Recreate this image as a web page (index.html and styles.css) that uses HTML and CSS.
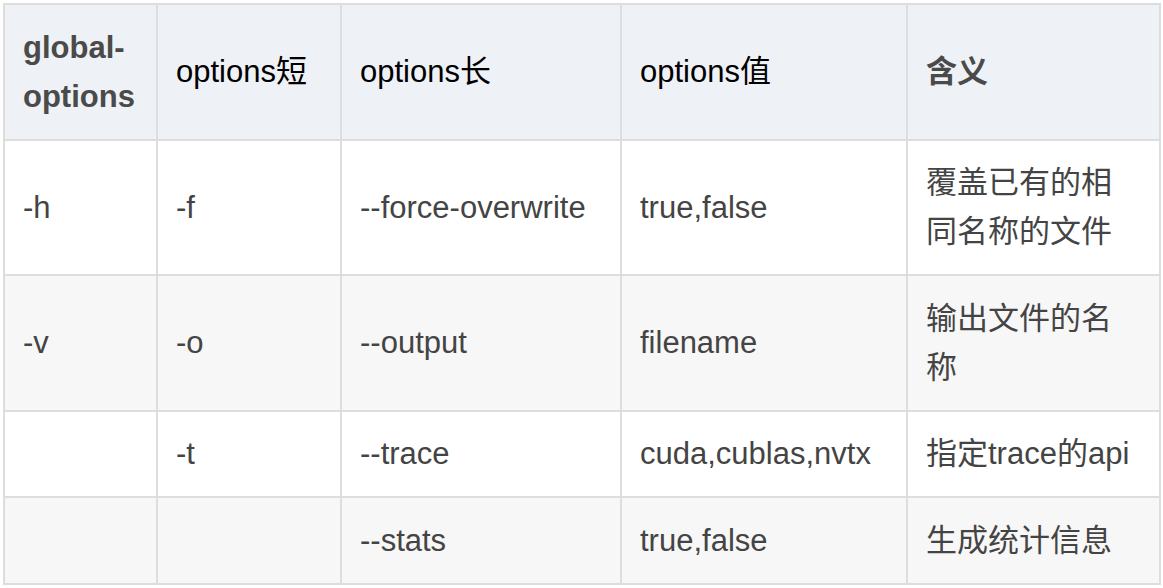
FILE: index.html
```html
<!DOCTYPE html>
<html>
<head>
<meta charset="utf-8">
<link rel="stylesheet" href="styles.css">
</head>
<body>
<table class="opts">
  <colgroup>
    <col class="c1"><col class="c2"><col class="c3"><col class="c4"><col class="c5">
  </colgroup>
  <thead>
    <tr>
      <th class="strong">global-<br>options</th>
      <th class="plain">options短</th>
      <th class="plain">options长</th>
      <th class="plain">options值</th>
      <th class="strong">含义</th>
    </tr>
  </thead>
  <tbody>
    <tr>
      <td>-h</td><td>-f</td><td>--force-overwrite</td><td>true,false</td><td>覆盖已有的相同名称的文件</td>
    </tr>
    <tr>
      <td>-v</td><td>-o</td><td>--output</td><td>filename</td><td>输出文件的名称</td>
    </tr>
    <tr>
      <td></td><td>-t</td><td>--trace</td><td>cuda,cublas,nvtx</td><td>指定trace的api</td>
    </tr>
    <tr>
      <td></td><td></td><td>--stats</td><td>true,false</td><td>生成统计信息</td>
    </tr>
  </tbody>
</table>
</body>
</html>
```
FILE: styles.css
```css
html, body {
  margin: 0;
  background: #ffffff;
}
body {
  padding: 3px;
  font-family: "Liberation Sans", "Noto Sans CJK SC", sans-serif;
  font-size: 31px;
  line-height: 49px;
  color: #444;
}
.opts {
  border-collapse: collapse;
  table-layout: fixed;
  width: 1158px;
}
.c1 { width: 153px; }
.c2 { width: 184px; }
.c3 { width: 280px; }
.c4 { width: 286px; }
.c5 { width: 253px; }
.opts th, .opts td {
  border: 2px solid #dddddd;
  padding: 17.75px 18px 17.75px 18px;
  text-align: left;
  vertical-align: middle;
}
.opts thead tr {
  background: #eef1f5;
}
.opts th.strong {
  font-weight: bold;
  color: #4a4a4a;
}
.opts th.plain {
  font-weight: normal;
  color: #000;
}
.opts tbody tr:nth-child(odd) { background: #ffffff; }
.opts tbody tr:nth-child(even) { background: #f7f7f7; }
```
